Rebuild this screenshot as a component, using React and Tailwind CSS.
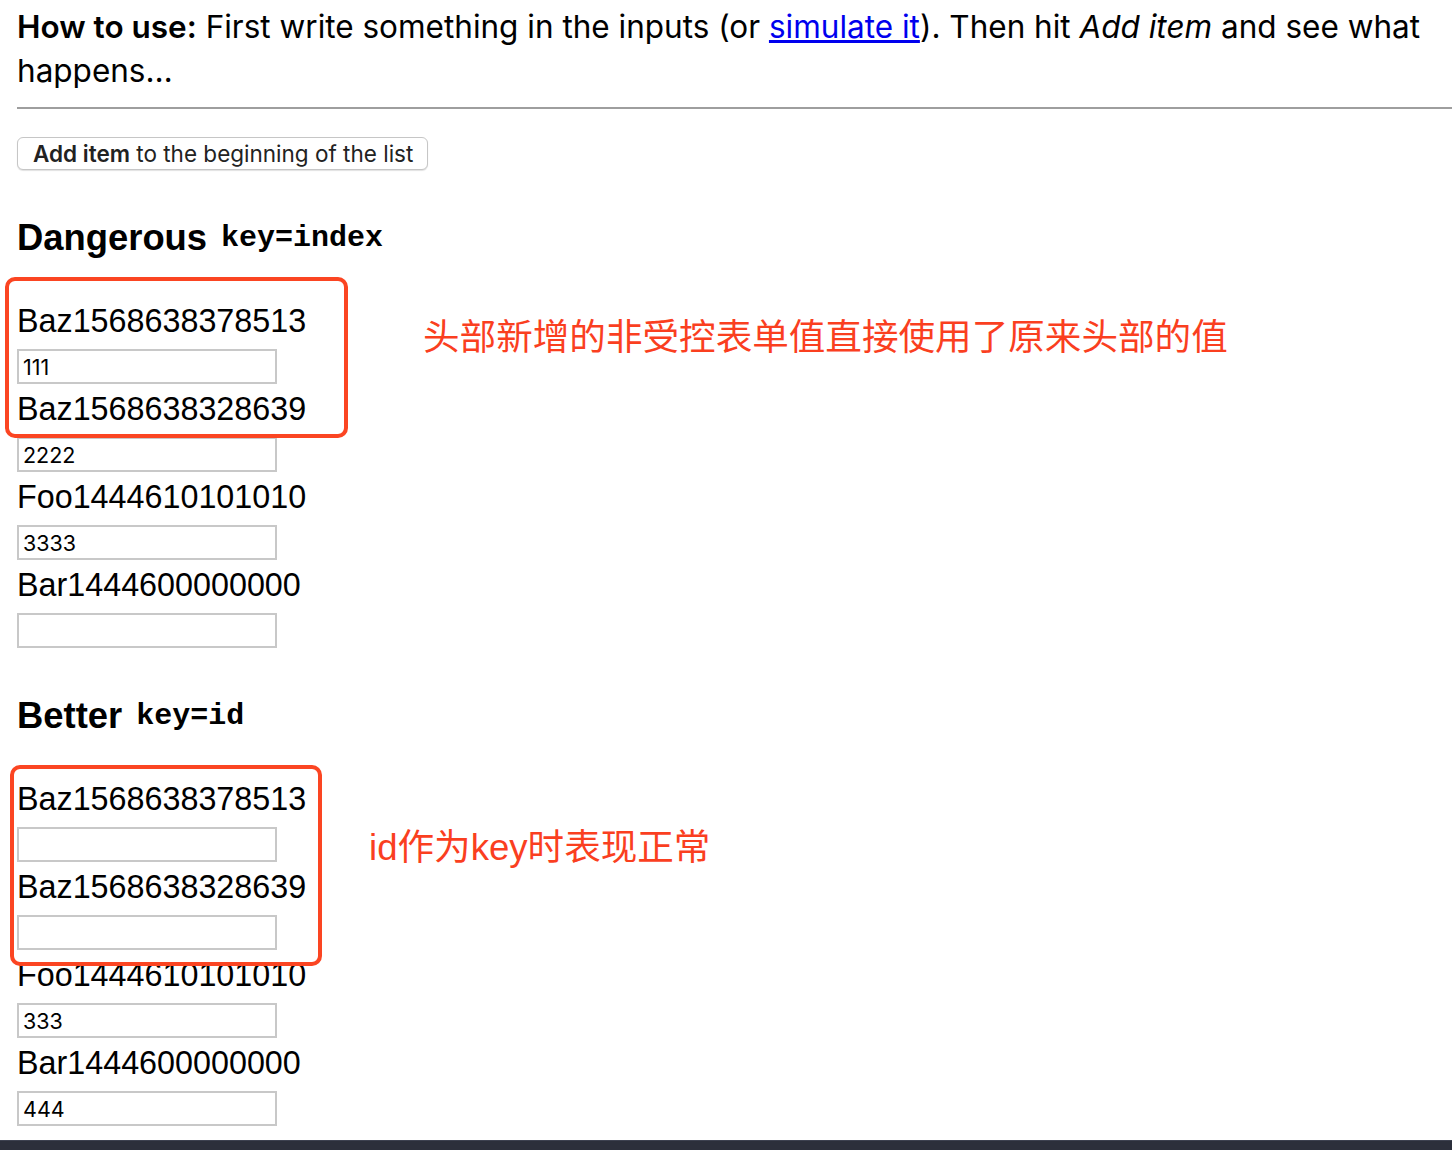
const dangerous = [
  { id: 'Baz1568638378513', value: '111' },
  { id: 'Baz1568638328639', value: '2222' },
  { id: 'Foo1444610101010', value: '3333' },
  { id: 'Bar1444600000000', value: '' },
];

const better = [
  { id: 'Baz1568638378513', value: '' },
  { id: 'Baz1568638328639', value: '' },
  { id: 'Foo1444610101010', value: '333' },
  { id: 'Bar1444600000000', value: '444' },
];

const sans = "font-['Liberation_Sans',Helvetica,Arial,sans-serif]";
const ui = "font-['Inter','Liberation_Sans',sans-serif]";
const cjk = "font-['Liberation_Sans','Noto_Sans_CJK_SC',sans-serif]";

function Item({ item }) {
  return (
    <div className="mb-[5px]">
      <div className="h-[37px] text-[32.3px] leading-[41px] text-black whitespace-nowrap">{item.id}</div>
      <input
        defaultValue={item.value}
        className={`mt-[11px] block w-[260px] h-[35px] border-2 border-[#c8c8c8] bg-white px-[4px] text-[21.5px] text-black outline-none ${ui}`}
      />
    </div>
  );
}

function Section({ title, keyName, items, note, noteMl, noteMt }) {
  return (
    <section>
      <h2 className="h-[44px] flex items-center text-[36.4px] font-bold leading-[44px] text-black">
        {title}
        <code className="ml-[14px] font-['Liberation_Mono','Courier_New',monospace] text-[30px] font-bold">{keyName}</code>
      </h2>
      <div className="mt-[41px] flex items-start">
        <div className="w-[260px] shrink-0">
          {items.map(it => <Item key={it.id} item={it} />)}
        </div>
        <p className={`${noteMl} ${noteMt} text-[36.6px] leading-[44px] text-[#fa3f1f] whitespace-nowrap ${cjk}`}>{note}</p>
      </div>
    </section>
  );
}

export default function App() {
  return (
    <div className={`relative w-[1452px] h-[1150px] overflow-hidden bg-white ${sans}`}>
      <div className="pl-[17px]">
        <p className={`mt-[5px] pr-[8px] text-[31.5px] leading-[44px] text-black ${ui}`}>
          <strong className="font-semibold">How to use:</strong> First write something in the inputs (or{' '}
          <a href="#" className="text-[#0000ee] underline">simulate it</a>). Then hit <em>Add item</em> and see what happens…
        </p>
        <hr className="mt-[14px] border-0 border-t-2 border-[#9e9e9e]" />

        <button className={`mt-[28px] h-[33px] rounded-[6px] border border-[#c6c6c6] bg-white pl-[15px] pr-[14px] text-[22.5px] leading-[31px] text-[#222] shadow-[0_1px_1px_rgba(0,0,0,0.12)] ${ui}`}>
          <b className="font-semibold">Add item</b> to the beginning of the list
        </button>

        <div className="mt-[46px]">
          <Section
            title="Dangerous"
            keyName="key=index"
            items={dangerous}
            note="头部新增的非受控表单值直接使用了原来头部的值"
            noteMl="ml-[146px]"
            noteMt="mt-[15px]"
          />
        </div>
        <div className="mt-[41px]">
          <Section
            title="Better"
            keyName="key=id"
            items={better}
            note="id作为key时表现正常"
            noteMl="ml-[92px]"
            noteMt="mt-[47px]"
          />
        </div>
      </div>

      <div className="absolute left-[5px] top-[277px] w-[343px] h-[161px] rounded-[10px] border-4 border-[#fb4522] pointer-events-none" />
      <div className="absolute left-[10px] top-[765px] w-[312px] h-[201px] rounded-[10px] border-4 border-[#fb4522] pointer-events-none" />

      <div className="absolute left-0 right-0 top-[1140px] h-[10px] bg-[#2c2f3b] border-t border-[#3d4150]" />
    </div>
  );
}
